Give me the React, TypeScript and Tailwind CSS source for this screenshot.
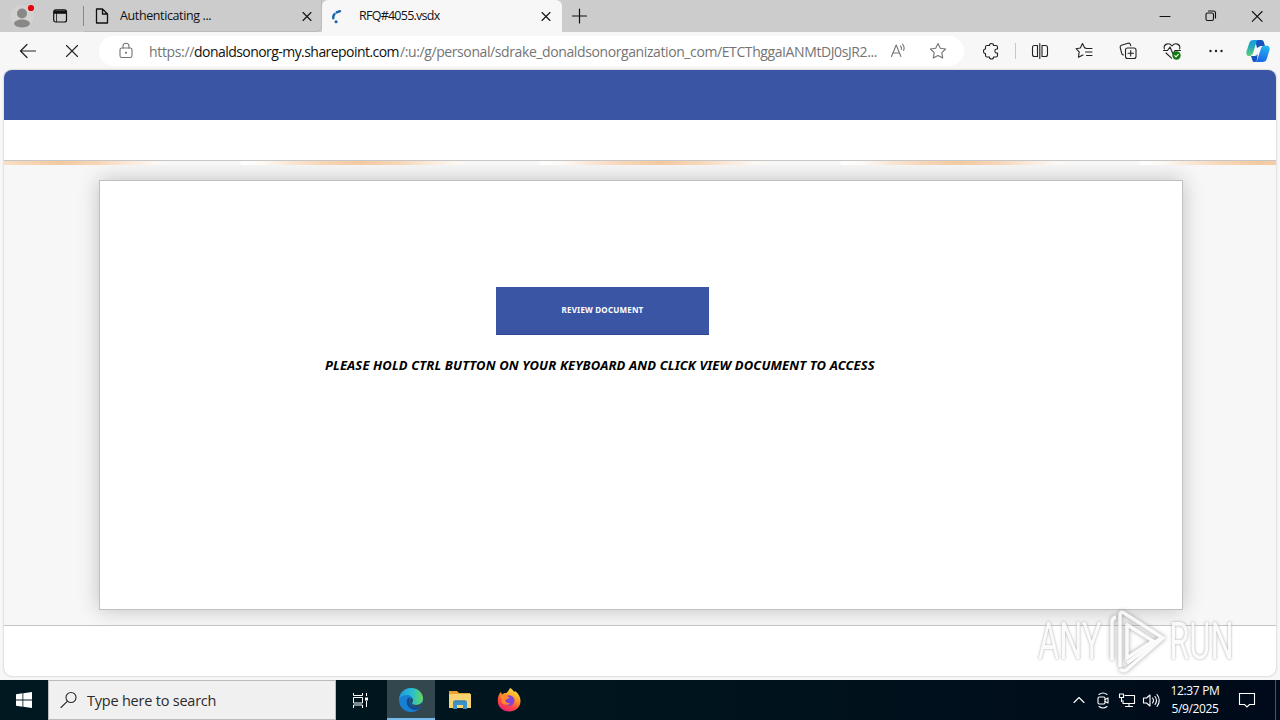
import React from 'react';

type IconProps = {
  className?: string;
  children: React.ReactNode;
};

// Line icon on a 20 unit grid, coloured by the surrounding text.
function Icon({ className = 'w-5 h-5', children }: IconProps) {
  return (
    <svg
      viewBox="0 0 20 20"
      className={`shrink-0 ${className}`}
      fill="none"
      stroke="currentColor"
      strokeWidth="1.1"
      strokeLinecap="round"
      strokeLinejoin="round"
    >
      {children}
    </svg>
  );
}

function CloseIcon() {
  return (
    <Icon>
      <path d="M6 6.5l8 8M14 6.5l-8 8" />
    </Icon>
  );
}

function TabBar() {
  return (
    <div className="flex h-8 bg-[#cccccc] text-[#111111]">
      <div className="flex w-[84px] items-center">
        {/* Profile with its notification dot */}
        <svg viewBox="0 0 28 28" className="ml-2 h-7 w-7">
          <circle cx="14" cy="14.500" r="11.500" fill="#d4d2d0" />
          <circle cx="14" cy="11.500" r="5" fill="#8a8886" />
          <path d="M6 22c0-3 3.500-4.500 8-4.500s8 1.500 8 4.500c-1.500 2.800-4.500 3.500-8 3.500s-6.500-.7-8-3.500z" fill="#8a8886" />
          <circle cx="23" cy="6" r="3.100" fill="#e3000f" />
        </svg>
        <svg viewBox="0 0 16 16" className="ml-4 h-4 w-4">
          <rect x="1.700" y="1.800" width="12.800" height="12.200" rx="2" fill="none" stroke="#111" strokeWidth="1.200" />
          <path d="M2 2.500h12v3.300H2z" fill="#111" />
          <path d="M4.500 5v9" stroke="#111" strokeWidth="0.800" />
        </svg>
        <div className="ml-[15px] h-5 w-px bg-[#888888]" />
      </div>

      <div className="flex w-[238px] items-center rounded-br-md border-b border-r border-[#bbbbbb] pl-2">
        <Icon>
          <path d="M4.500 3h6l5 5v9h-11zM10.500 3v5h5" strokeWidth="1.300" />
        </Icon>
        <div className="ml-2 w-[177px] whitespace-nowrap pt-[2px] font-['Open_Sans',sans-serif] text-[12.500px] tracking-[-0.380px]">
          Authenticating ...
        </div>
        <CloseIcon />
      </div>

      <div className="flex w-[240px] items-center rounded-t-md bg-[#f7f7f7] pl-[6px]">
        <svg viewBox="0 0 20 20" className="h-5 w-5" fill="none" stroke="#1764ac" strokeWidth="2.400" strokeLinecap="round">
          <path d="M5.300 12.300Q4.900 10 6.500 8M8.700 6.400L12 5.200" />
          <path d="M8 15.700h.1" strokeWidth="3" />
        </svg>
        <div className="ml-[11px] w-[177px] whitespace-nowrap font-['Open_Sans',sans-serif] text-[12.500px] tracking-[-0.750px]">
          RFQ#4055.vsdx
        </div>
        <CloseIcon />
      </div>

      <div className="flex flex-1 items-center pl-[7px]">
        <Icon>
          <path d="M3.500 10h14M10.500 3v14" strokeWidth="1.200" />
        </Icon>
      </div>

      <div className="flex w-[138px] items-center">
        <div className="flex w-[46px] justify-center">
          <Icon><path d="M5 10.500h10" /></Icon>
        </div>
        <div className="flex w-[46px] justify-center">
          <Icon>
            <rect x="5" y="7" width="7.500" height="7.500" rx="1.500" />
            <path d="M7.500 5h5a2 2 0 0 1 2 2v5" />
          </Icon>
        </div>
        <div className="flex w-[46px] justify-center">
          <Icon><path d="M5.300 5.500l9.800 9.800M15.100 5.500l-9.800 9.800" /></Icon>
        </div>
      </div>
    </div>
  );
}

function Copilot() {
  return (
    <svg viewBox="0 0 24 24" className="h-6 w-6">
      <defs>
        <linearGradient id="cpLeft" x1="0" y1="0" x2="0" y2="1">
          <stop offset="0" stopColor="#159ee5" />
          <stop offset="0.450" stopColor="#24acb5" />
          <stop offset="1" stopColor="#5fd07a" />
        </linearGradient>
        <linearGradient id="cpRight" x1="0.500" y1="0" x2="0.300" y2="1">
          <stop offset="0" stopColor="#21b4f1" />
          <stop offset="0.500" stopColor="#2288ea" />
          <stop offset="1" stopColor="#1766e8" />
        </linearGradient>
      </defs>
      <path d="M9 1h6.300c1.500 0 2 .8 2.500 2.100L19 7h-4.500L11 9z" fill="#1654bd" />
      <path d="M7.500 1h5.300c-1.500 0-2.200 1-2.600 2.500L7.400 13c-.5 1.700-1.200 2.700-2.700 4H3.200C.8 17-.1 14.900.5 12.500l2.700-8.300C3.900 2 5.300 1 7.500 1z" fill="url(#cpLeft)" />
      <path d="M5 17.100h3.500c1.700 0 2.500-.8 3-2.500l-.3 5.500c-.4 1.900-1.100 2.900-2.500 2.900-1.500 0-2-.8-2.400-2.100z" fill="#1654bd" />
      <path d="M16.500 23H8.700c1.500 0 2.300-1 2.700-2.500l3.700-11.400c.4-1.500 1.300-2.400 2.800-2.400h2.900c2.400 0 3.300 2 2.700 4.400l-2.700 8.700c-.7 2.200-2.100 3.200-4.300 3.200z" fill="url(#cpRight)" />
    </svg>
  );
}

function Toolbar() {
  return (
    <div className="flex h-[38px] items-center bg-[#f7f7f7] text-[#222222]">
      <div className="flex w-[99px] items-center pl-[18px]">
        <Icon className="h-5 w-5">
          <path d="M2.500 10h15M9 3.500L2.500 10 9 16.500" strokeWidth="1.200" />
        </Icon>
        <Icon className="ml-6 h-5 w-5">
          <path d="M4.500 4.500l11 11M15.500 4.500l-11 11" />
        </Icon>
      </div>

      <div className="mb-px flex h-[30px] w-[865px] items-center rounded-full bg-white pl-[17px] text-[#747474]">
        <Icon>
          <rect x="4" y="7" width="12" height="9.500" rx="1.800" />
          <path d="M7 7V5.200a3 3 0 0 1 6 0V7" />
          <circle cx="10" cy="11.800" r="0.500" fill="currentColor" />
        </Icon>
        <div className="ml-[13px] flex w-[734px] whitespace-nowrap pt-px font-['Open_Sans',sans-serif] text-[14px]">
          <span className="w-[45px] shrink-0 tracking-[-0.350px]">https://</span>
          <span className="w-[206px] shrink-0 tracking-[-0.550px] text-[#111111]">donaldsonorg-my.sharepoint.com</span>
          <span className="shrink-0 tracking-[-0.400px]">/:u:/g/personal/sdrake_donaldsonorganization_com/ETCThggaIANMtDJ0sJR2...</span>
        </div>
        <Icon className="ml-[5px] h-5 w-5">
          <path d="M3.500 15.500L8.200 4l4.700 11.500M5 12h6.400M12.500 5c1 1 1.300 2.200.9 3.500M14.500 3c1.700 2 2 4.300 1.100 6.500" />
        </Icon>
        <Icon className="ml-5 h-5 w-5">
          <path d="M10 2.500l2.300 4.800 5.300.7-3.800 3.700.9 5.200-4.700-2.500-4.700 2.500.9-5.200L2.400 8l5.300-.7z" />
        </Icon>
      </div>

      <div className="flex w-[54px] items-center pl-[17px]">
        {/* Extensions, notched on the right */}
        <Icon>
          <path d="M6 4.500h2.500C8 1.800 13 1.800 12.500 4.500h2.500a1.500 1.500 0 0 1 1.500 1.500V8c-3.500-.6-3.500 4.600 0 4v2.500a1.500 1.500 0 0 1-1.500 1.500h-2.500c.5 2.700-4.500 2.700-4 0H6A1.500 1.500 0 0 1 4.500 14.500V12.500C1.800 13 1.800 7.500 4.500 8V6A1.500 1.500 0 0 1 6 4.500z" />
        </Icon>
        <div className="ml-3.5 h-4 w-px bg-[#c8c8c8]" />
      </div>
      <div className="flex w-11 justify-center">
        <Icon>
          <path d="M7.500 4.500H4.500a2 2 0 0 0-2 2v7a2 2 0 0 0 2 2h3zM12 4.500h3.500a2 2 0 0 1 2 2v7a2 2 0 0 1-2 2H12zM9.800 2.500v15" />
        </Icon>
      </div>
      <div className="flex w-11 justify-center">
        <Icon>
          <path d="M12 7h-1.300L8.500 2.500 6.300 7 2 7.700l3.200 3.100-.8 5.500 4.600-2.400M12 7.500h6M11.500 11h6.500M12.500 14.500H18" />
        </Icon>
      </div>
      <div className="flex w-11 justify-center">
        <Icon>
          <rect x="7.500" y="7" width="10.500" height="10.500" rx="2" />
          <path d="M12.700 9.500v5.500M10 12.300h5.500M5.500 14c-1-.2-1.600-.8-1.800-1.700L2.200 6.500c-.2-1 .3-2 1.300-2.300l6.500-2c1-.3 2 .2 2.400 1.200l.3 1.200" />
        </Icon>
      </div>
      <div className="flex w-11 justify-center">
        <Icon>
          <path d="M2.300 8C1.200 3 7 1 10 5c3-4 8.800-2 7.700 3M4 12l5.500 5.200M1.500 9.500h4L8 6l3 7 2-3.500h5.500" />
          <circle cx="14.500" cy="14.500" r="4.200" fill="#107c10" stroke="none" />
          <path d="M12.800 14.700l1.200 1.100 2.300-2.400" stroke="#fff" />
        </Icon>
      </div>
      <div className="flex w-11 justify-center">
        <Icon>
          <g fill="currentColor" stroke="none">
            <circle cx="4.500" cy="10" r="1.200" />
            <circle cx="10" cy="10" r="1.200" />
            <circle cx="15.500" cy="10" r="1.200" />
          </g>
        </Icon>
      </div>
      <div className="flex w-10 justify-center">
        <Copilot />
      </div>
    </div>
  );
}

function Watermark() {
  return (
    <div className="absolute left-[1032px] top-[538px] flex h-[68px] w-[198px] items-center opacity-80">
      <span className="flex w-[68px] shrink-0 justify-center">
        <span className="scale-x-[0.640] whitespace-nowrap font-['Roboto',sans-serif] text-[51px] text-[#fafafa] [text-shadow:0_0_3px_#888888]">
          ANY
        </span>
      </span>
      <svg viewBox="0 0 60 64" className="ml-[3px] h-16 w-[60px] shrink-0 drop-shadow-[0_0_2px_#888888]" fill="none" stroke="#fafafa" strokeWidth="3.500">
        <path d="M5 50V12q0-4 4-5M13 57V5q0-4 4-2l39 25-37 32q-3 2-6-1" />
        <path d="M20 14v34l26-17-27-17" />
        <path d="M20 53l34-25" />
      </svg>
      <span className="flex w-[68px] shrink-0 justify-center">
        <span className="scale-x-[0.640] whitespace-nowrap font-['Roboto',sans-serif] text-[51px] text-[#fafafa] [text-shadow:0_0_3px_#888888]">
          RUN
        </span>
      </span>
    </div>
  );
}

function DocumentPage() {
  return (
    <div className="h-[610px] bg-[#f7f7f7] px-1">
      <div className="relative h-[606px] overflow-hidden rounded-lg bg-white shadow-[0_0_2px_#aaaaaa]">
        <div className="h-[50px] bg-[#3b55a5]" />
        <div className="h-10 bg-white" />
        {/* Loading strip, one glow every 300px */}
        <div className="h-[5px] border-t border-[#c6c6c6] bg-[linear-gradient(90deg,#f3c9a0_0px,#f7d7b9_40px,#fae7d6_65px,#fdf8f3_95px,#f7f7f7_110px,#f7f7f7_178px,#ffffff_184px,#fdf8f3_205px,#fae7d6_230px,#f7d7b9_260px,#f3c9a0_300px)] bg-[length:300px_100%] bg-[position:56px_0] bg-origin-border" />
        <div className="flex h-[461px] justify-center overflow-hidden border-b border-[#c3c3c3] bg-[#f7f7f7] pt-[15px]">
          <div className="ml-[2px] h-[430px] w-[1084px] border border-[#c0c0c0] bg-white pt-[106px] shadow-[0_0_20px_rgba(0,0,0,0.220)]">
            <button type="button" className="ml-[396px] block h-12 w-[213px] border-b border-[#30488f] bg-[#3b55a5] pb-[2px] font-['Noto_Sans',sans-serif] text-[8px] font-bold tracking-[0.200px] text-white">
              REVIEW DOCUMENT
            </button>
            <p className="ml-[225px] mt-5 whitespace-nowrap font-['Noto_Sans',sans-serif] text-[13px] font-bold italic leading-5 tracking-[0.120px] text-black">
              PLEASE HOLD CTRL BUTTON ON YOUR KEYBOARD AND CLICK VIEW DOCUMENT TO ACCESS
            </p>
          </div>
        </div>
        <Watermark />
      </div>
    </div>
  );
}

function EdgeLogo() {
  return (
    <svg viewBox="0 0 24 24" className="h-6 w-6">
      <defs>
        <linearGradient id="edgeTop" x1="0" y1="0.500" x2="1" y2="0.500">
          <stop offset="0" stopColor="#2197dc" />
          <stop offset="0.550" stopColor="#28bfd0" />
          <stop offset="1" stopColor="#67d858" />
        </linearGradient>
      </defs>
      <circle cx="12" cy="12" r="12" fill="#1681d3" />
      <path d="M0 11C1 4 6 0 12 0c7 0 12 5 12 10.500 0 4-3 6.500-7 6.500-2.500 0-4-1-4-2 0-.8 1-1.200 1-3C14 9 11 7 8 7c-3.500 0-6.500 1.500-8 4z" fill="url(#edgeTop)" />
      <path d="M9 10c-3 4-.5 11 6 12 3 .3 6-1.500 7.500-4-2 1.200-5 1.500-7.500.5-4-1.500-5.500-5-3.500-8.300C10.800 9.300 9.700 9.300 9 10z" fill="#124b92" />
      <path d="M14 12c0 1.800-1 2.200-1 3 0 1 1.500 2 4 2 3 0 5.500-1.500 6.500-3.500V18l-1 .1c-2 1.100-5 1.300-7 .4-4-1.500-5.500-5-3.500-8.300 1.200 0 2 .8 2 1.800z" fill="#34474f" />
    </svg>
  );
}

function Folder() {
  return (
    <svg viewBox="0 0 22 20" className="h-5 w-[22px]">
      <path d="M0 1h8l2 2h11v4H0z" fill="#e6a32e" />
      <path d="M0 4h22v14H0z" fill="#f8d371" />
      <path d="M4 19v-7a1.500 1.500 0 0 1 1.500-1.500h11A1.500 1.500 0 0 1 18 12v7h-4v-4H8v4z" fill="#3d92c9" />
      <path d="M5.500 10.500h11v1.500h-11z" fill="#3d83b0" />
    </svg>
  );
}

function Firefox() {
  return (
    <svg viewBox="0 0 24 24" className="h-6 w-6">
      <defs>
        <linearGradient id="fox" x1="0.800" y1="0" x2="0.300" y2="1">
          <stop offset="0" stopColor="#fff04a" />
          <stop offset="0.400" stopColor="#ff9b24" />
          <stop offset="0.700" stopColor="#ff4940" />
          <stop offset="1" stopColor="#e72375" />
        </linearGradient>
      </defs>
      <path d="M13 0c2 .8 3.300 2.500 4 4l1-1c3.500 2.500 5.500 6 5.500 10 0 6-4.800 10.500-11.200 10.500S.8 19 .8 13C.8 9 2 5.500 4 4l1 2.500C6.500 5 8 5 9.500 5 11 3.500 12 2 13 0z" fill="url(#fox)" />
      <circle cx="12.200" cy="12.500" r="5.300" fill="#8143d9" />
      <path d="M4 8c2-1.500 5-1.200 7 .5l2 1.500c-2 .2-3 1.500-4.500 1.800-.3 2.500 2 4 5 3-2 3-7.500 2.500-9-.8z" fill="#ff8a2b" />
    </svg>
  );
}

function Taskbar() {
  return (
    <div className="flex h-10 bg-[linear-gradient(90deg,#001820_0%,#00141d_55%,#000a1a_100%)] text-white">
      <div className="flex w-12 items-center justify-center">
        <svg viewBox="0 0 16 16" className="h-4 w-4" fill="#fff">
          <path d="M0 2.200l6.500-.9v6.300H0zM7.300 1.200L16 0v7.600H7.300zM0 8.400h6.500v6.300L0 13.800zM7.300 8.400H16V16l-8.700-1.200z" />
        </svg>
      </div>
      <div className="flex w-72 items-center border border-[#bcbcbc] bg-[#f0f0f0] pl-[11px] text-[#2b2b2b]">
        <Icon>
          <circle cx="11" cy="7.500" r="5" />
          <path d="M7.500 11.200L1 17.500" />
        </Icon>
        <span className="ml-[7px] whitespace-nowrap pt-[2px] font-['Open_Sans',sans-serif] text-[14.500px] tracking-[-0.220px]">Type here to search</span>
      </div>
      <div className="flex w-[51px] items-center justify-center pr-[2px]">
        <svg viewBox="0 0 18 18" className="h-[18px] w-[18px]" fill="none" stroke="#fff">
          <path d="M1.500 2v2.500h9V2M1.500 17v-3h9v3M1.500 6.500h9v5.500h-9zM14.500 2v3M14.500 10v6" />
          <path d="M13 6.500h3v3h-3z" fill="#fff" stroke="none" />
        </svg>
      </div>
      <div className="flex w-12 items-center justify-center border-b-2 border-[#76b9ed] bg-[#33474f] pt-px">
        <EdgeLogo />
      </div>
      <div className="flex w-[49px] items-center justify-center">
        <Folder />
      </div>
      <div className="flex w-[49px] items-center justify-center">
        <Firefox />
      </div>
      <div className="flex flex-1 items-center justify-end">
        <Icon className="mr-1 h-5 w-5">
          <path d="M5 12.500L10 7.500l5 5" />
        </Icon>
        <Icon className="mr-1 h-5 w-5">
          <rect x="5" y="7" width="7" height="7" rx="1.200" />
          <path d="M12 9.500l3-1.500v5l-3-1.500M6 4.500q4-3 8 0M6 16.500q4 3 8 0" />
        </Icon>
        <Icon className="mr-1 h-5 w-5">
          <path d="M8 5.500h9.500v8H6v-3M12 13.500v3M8.500 16.500h7M2.500 4h4v3.500h-4zM4.500 7.500v4" />
        </Icon>
        <Icon className="h-5 w-5">
          <path d="M2.500 8h3l3.500-3v11l-3.500-3h-3zM11.500 8q2 2.300 0 5M14 6.500q3 4 0 8M16 4.500q4.500 6 0 12" />
        </Icon>
        <div className="w-[68px] text-center font-['Open_Sans',sans-serif] text-[12px] leading-[18px] tracking-[-0.350px]">
          <div>12:37 PM</div>
          <div>5/9/2025</div>
        </div>
        <Icon className="ml-[8px] h-5 w-5">
          <path d="M2.500 3.500h15v11h-5L10 17l-2.500-2.500h-5z" strokeLinejoin="miter" />
        </Icon>
        <div className="ml-[18px] h-full w-px bg-[#4a5660]" />
        <div className="w-1" />
      </div>
    </div>
  );
}

export default function App() {
  return (
    <div className="h-[720px] w-[1280px] overflow-hidden bg-[#f7f7f7]">
      <TabBar />
      <Toolbar />
      <DocumentPage />
      <Taskbar />
    </div>
  );
}
